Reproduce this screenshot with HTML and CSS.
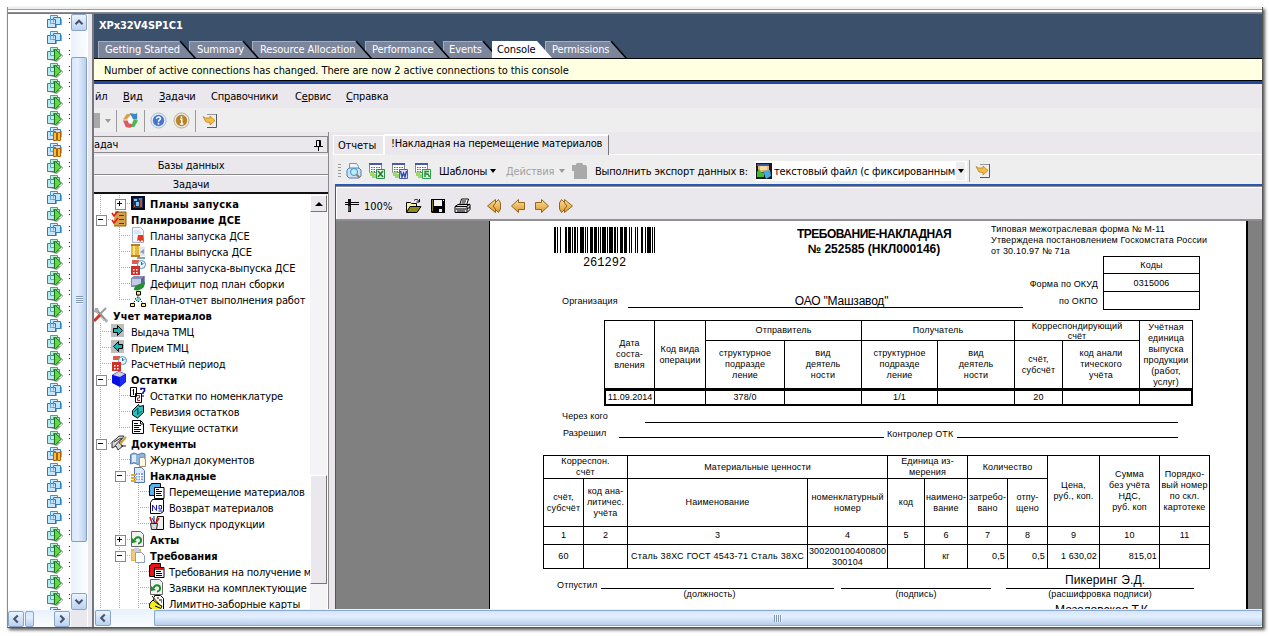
FILE: index.html
```html
<!DOCTYPE html>
<html lang="ru">
<head>
<meta charset="utf-8">
<title>XPx32V4SP1C1</title>
<link rel="stylesheet" href="styles.css">
</head>
<body>
<svg class="defs" width="0" height="0" aria-hidden="true">
  <symbol id="vm" viewBox="0 0 16 16">
    <path d="M2 14h8v-3h5V5h-1v5H9v3H2z" fill="#a4a4a4"/>
    <path d="M3.500 1.500h7v8h-7z" fill="#d9edfd" stroke="#3a93dc"/>
    <path d="M6.500 3.500h7v7h-7z" fill="#c3e2fb" stroke="#2380cc"/>
    <path d="M.5 5.500h8v8h-8z" fill="#c6e6fc" stroke="#1f7ac4"/>
    <path d="M3.500 5v4.500h5M6.500 5v3.500" fill="none" stroke="#5aa8e4"/>
  </symbol>
  <symbol id="play" viewBox="0 0 16 16">
    <path d="M2 14h8v-2h5V9h1v1l-6 6z" fill="#a4a4a4"/>
    <path d="M3.500 1.500h7v8h-7z" fill="#c4ecd8" stroke="#4aa48c"/>
    <path d="M6.500 3.500h6v7h-6z" fill="#9fe0b4" stroke="#38a068"/>
    <path d="M.5 5.500h8v8h-8z" fill="#c0e6f2" stroke="#2d84b8"/>
    <path d="M3.500 5v4.500h4" fill="none" stroke="#5ab4b0"/>
    <path d="M7.500 3.500h1L14.500 9l-6 5.500h-1z" fill="#66d83c" stroke="#0f7c20"/>
  </symbol>
  <symbol id="pause" viewBox="0 0 16 16">
    <use href="#vm"/>
    <path d="M6.500 6.500h3v8h-3zM10.500 6.500h3v8h-3z" fill="#ffb01e" stroke="#b05e08"/>
    <path d="M7 7h2v7H7zM11 7h2v7h-2z" fill="#ffbe38"/>
  </symbol>
  <symbol id="chess" viewBox="0 0 16 16"><path d="M1 1h14v14H1z" fill="#0c1838"/><path d="M2 2h12v12H2z" fill="none" stroke="#000"/><path d="M3 3h10v10H3z" fill="#1c3566"/><path d="M4 4h3v2H4zM6 7h3v4H6z" fill="#7fc4ee"/><path d="M10 5h2v7h-2zM4 10h1v2H4z" fill="#b5552a"/><path d="M9 3h3v2H9z" fill="#4c80b8"/></symbol>
  <symbol id="check" viewBox="0 0 16 16"><path d="M4 1h11v14H3V8z" fill="#d5a046"/><path d="M4 1h11v14H3" fill="none" stroke="#8a5a1c"/><path d="M8 4.500h5M8 8.500h5M8 12.500h5" stroke="#5a3510"/><path d="M1 2l2 3 4-5M1 9l2 3 4-5" fill="none" stroke="#e01818" stroke-width="1.600"/></symbol>
  <symbol id="cert" viewBox="0 0 16 16"><path d="M2.500.5h8l3 3v12h-11z" fill="#f4f7fd" stroke="#a8b4d0"/><path d="M4 4h6M4 6h7" stroke="#c4d0ea"/><path d="M8 8h5l1 7-2-2-2 2-1-2-2 1z" fill="#e23a22"/></symbol>
  <symbol id="roll" viewBox="0 0 16 16"><path d="M7 4h8v9H7z" fill="#dfe6ef"/><path d="M1 1h8v12H1z" fill="#e9b83a"/><path d="M3 1h2v12H3z" fill="#fbe28a"/><path d="M1 1h9v2H1zM1 12h9v2H1z" fill="#b5822a"/><path d="M10 9l4-3v5zM7 14h8v2H7z" fill="#8ea0b4"/></symbol>
  <symbol id="period" viewBox="0 0 16 16"><path d="M2 1h7v4H2z" fill="#e05a50"/><circle cx="11.500" cy="5.500" r="4" fill="#e4f6fb" stroke="#4a98b8"/><path d="M11.500 3v3l2-2" fill="none" stroke="#2c6c90"/><path d="M1 7h9v9H1z" fill="#cf3028"/><path d="M3 10h1.500v1.500H3zM6 10h1.500v1.500H6zM3 13h1.500v1.500H3zM6 13h1.500v1.500H6z" fill="#fff"/></symbol>
  <symbol id="deficit" viewBox="0 0 16 16"><path d="M1 3l3-2h11v8l-3 3H1z" fill="#8790b8"/><path d="M2 4h9v6H2z" fill="#c5cbe6"/><path d="M11 4l3-3v9l-3 2z" fill="#5c668f"/><path d="M4 15c0-4 4-6 7-6.500L15 7l-1 5c-3 3-6 4-10 3z" fill="#239030"/></symbol>
  <symbol id="org" viewBox="0 0 16 16"><path d="M8 4v3M5 10l-3 3M11 10l3 3M5 8l3-2 3 2-3 3z" fill="none" stroke="#222" stroke-dasharray="1.500 1"/><path d="M6.500.5h4V4h-4zM.5 12.500h4v3h-4zM11.500 12.500h4v3h-4z" fill="#fff45a" stroke="#000"/><path d="M6 8.500L8 6.500l2 2-2 2z" fill="#45d8e8"/></symbol>
  <symbol id="tools" viewBox="0 0 16 16"><path d="M4 3l9 10" stroke="#8a8a8a" stroke-width="3"/><path d="M4 4l8 9" stroke="#ddd"/><path d="M3 1l3 0 1 3-2 2-3-1zM12 12l3 0 1 2-2 2z" fill="#aaa"/><path d="M14 1L8 7" stroke="#9a9a9a" stroke-width="2"/><path d="M8 8l-6 6" stroke="#d83020" stroke-width="3"/></symbol>
  <symbol id="out" viewBox="0 0 16 16"><path d="M0 1h13v13H0z" fill="#bdbdbd"/><path d="M2.500 5.500h4v-3l5 5-5 5v-3h-4z" fill="#18b8b8" stroke="#000"/></symbol>
  <symbol id="in" viewBox="0 0 16 16"><path d="M0 1h13v13H0z" fill="#bdbdbd"/><path d="M11.500 5.500h-4v-3l-5 5 5 5v-3h4z" fill="#18b8b8" stroke="#000"/></symbol>
  <symbol id="cube" viewBox="0 0 16 16"><path d="M1 4l7-4 7 3v8l-6 5-8-4z" fill="#0a12f2"/><path d="M2 4l6-3.500L14 3 9 6z" fill="#d2d2d2"/><path d="M9 6.500L14.500 4v7L9 15z" fill="#1c2cff"/><path d="M2 5l6 2v8l-6-3z" fill="#0510d8"/></symbol>
  <symbol id="nomen" viewBox="0 0 16 16"><path d="M.5.500h6v9h-6zM5.500 6.500h6v9h-6z" fill="#fff" stroke="#000"/><path d="M3.500 2v6M2.500 3.500h1" stroke="#000"/><path d="M7 8.500h2.500v2.500H7.500v2.500H10" fill="none" stroke="#c01818"/><path d="M11 3V1.500h3.500v2.500L13 5.500V7M12.200 9h1.600" fill="none" stroke="#10108c" stroke-width="1.600"/></symbol>
  <symbol id="book3" viewBox="0 0 16 16"><path d="M2.500 7.500l6-6 1 2 4-1v7l-6 5.500-5-3z" fill="#2cc0c4" stroke="#000"/><path d="M4 9l4-4v6l4-3M7.500 12V6" fill="none" stroke="#064"/></symbol>
  <symbol id="page" viewBox="0 0 16 16"><path d="M2.500 1.500h8l3 3v10h-11z" fill="#fff" stroke="#000"/><path d="M4 4.500h4M4 6.500h7M4 8.500h5M4 10.500h7M4 12.500h6M10.500 2v3h3" fill="none" stroke="#000"/></symbol>
  <symbol id="pens" viewBox="0 0 16 16"><path d="M1 7l4-3 3-3h5l-5 7 4 3-5 4-2-4-4 2z" fill="#d5d8dc" stroke="#333"/><path d="M3 7l7-4M3 12l8-9" stroke="#444"/><path d="M15 2L9 9" stroke="#d89a28" stroke-width="2"/><path d="M10 11l5 0" stroke="#222"/></symbol>
  <symbol id="journal" viewBox="0 0 16 16"><path d="M.5 3.500L4 2l4 1.500 4-1.500 3 1v9l-3-.5-4 2-4-1.500-3.500 1z" fill="#8fb4dc" stroke="#5a7cae"/><path d="M2 4l4-.5v7.500l-4 0z" fill="#dcebfb"/><path d="M9.500 6.500h4l2 2v7h-6z" fill="#fff9e0" stroke="#a09468"/></symbol>
  <symbol id="invoice" viewBox="0 0 16 16"><path d="M4.500.5h7l3 3v12h-10z" fill="#dce8fa" stroke="#5577b0"/><path d="M6 6h7v7H6z" fill="#7f9fd4"/><path d="M8 6v7M10.500 6v7M6 8.500h7M6 11h7" stroke="#fff"/><path d="M1 7h5v2H1zM1 10h5v2H1zM1 13h5v2H1z" fill="#e8a820"/></symbol>
  <symbol id="move" viewBox="0 0 16 16"><path d="M.5 2.500h1l1-2h9v12h-11z" fill="#55b4f0" stroke="#000"/><path d="M5.500 4.500h9.500v11h-9.500z" fill="#fff" stroke="#000"/><path d="M7 6.500h3M7 8.500h6M7 10.500h5M7 12.500h6" stroke="#000"/></symbol>
  <symbol id="return" viewBox="0 0 16 16"><path d="M3.500.5h11v12l-3 2h-10v-11z" fill="#fff" stroke="#000"/><path d="M3.500 12V6l4 5.500V6" fill="none" stroke="#1414c0"/><path d="M10 6.500h2.500v3.500H10zM9.500 12h4" fill="none" stroke="#1414c0"/></symbol>
  <symbol id="prod" viewBox="0 0 16 16"><path d="M8.500 1.500h6v13h-9z" fill="#eee" stroke="#000"/><path d="M3 8l-2-6M7 8l3-5" stroke="#d01818" stroke-width="1.500"/><path d="M5 8V1" stroke="#222"/><path d="M6 8l-3-5" stroke="#2020d0"/><path d="M1.500 8.500h7l-1 6h-5z" fill="#d8d8d8" stroke="#222"/></symbol>
  <symbol id="akt" viewBox="0 0 16 16"><path d="M1.500.5h9l3 3v12h-12z" fill="#f1f1f1" stroke="#666"/><path d="M4.500 9C6 5.500 10 5.500 11 8.500c.5 2-1 4-3 4" fill="none" stroke="#1b8c24" stroke-width="2"/><path d="M2 7l5 4-5 1z" fill="#1b8c24"/></symbol>
  <symbol id="paste" viewBox="0 0 16 16"><path d="M1 2h10v12H1z" fill="#ebb548"/><path d="M2 4h8v9H2z" fill="#f2cb78"/><path d="M4 .5h5V4H4z" fill="#c9d2dc"/><path d="M5.500 5.500h6l3 3v7h-9z" fill="#fff" stroke="#8ba0bc"/></symbol>
  <symbol id="req" viewBox="0 0 16 16"><path d="M.5 2.500h1l1-2h9v13h-11z" fill="#f01010" stroke="#000"/><path d="M5.500 4.500h9.500v10h-9.500z" fill="#fff" stroke="#000"/><path d="M6 6h9" stroke="#f01010" stroke-width="2"/><path d="M7 8.500h5M7 10.500h6M7 12.500h6" stroke="#000"/></symbol>
  <symbol id="limit" viewBox="0 0 16 16"><path d="M5.500.5h6l3 3v12h-12z" fill="#fff" stroke="#000"/><path d="M8 3h2M10 5h3M12 7h1" stroke="#000"/><path d="M1 8l3-3 5 4 4 2-2 4H4L0 12z" fill="#f4ee20" stroke="#000"/><path d="M3 1l7 8M6 11l5 2" stroke="#000"/><path d="M4 1l7 8" stroke="#f4ee20"/></symbol>

  <symbol id="ring" viewBox="0 0 18 18"><path d="M1 8l4-6h5L5 8z" fill="#dca048"/><path d="M8 1l6 1 2-1v7l-6 0 1-2z" fill="#3a88cc"/><path d="M12 8l5 1-4 7H8l3-4z" fill="#48b850"/><path d="M1 9h5l1 3 4 1-2 4-5-1z" fill="#dc5a60"/><path d="M6 7.500l3-3 3.500 4L9 12z" fill="#fff"/></symbol>
  <symbol id="help" viewBox="0 0 18 18"><circle cx="9" cy="9" r="8" fill="#e6edf8" stroke="#a8b8d4"/><circle cx="9" cy="9" r="6" fill="#4577cc"/><path d="M6.800 7.200C7 4.500 11.500 4.800 11 7.300 10.700 8.500 9 8.700 9 10.200M9 11.500v1.700" fill="none" stroke="#fff" stroke-width="1.600"/></symbol>
  <symbol id="info" viewBox="0 0 18 18"><circle cx="9" cy="9" r="8" fill="#efe9dc" stroke="#b0aaa0"/><circle cx="9" cy="9" r="6" fill="#b5852c"/><path d="M9 4.500v1.800M7.500 7.800H9.300v5M7.500 12.800h3.500" fill="none" stroke="#fff" stroke-width="1.600"/></symbol>
  <symbol id="exit" viewBox="0 0 16 16"><path d="M14.500 1v13.500H5" fill="none" stroke="#55585e"/><path d="M5 1.500h9" stroke="#999"/><path d="M1 3.500l2.500 1.500L8 5V3l5 4.500L8 12V9.500L4 9z" fill="#f8bc40" stroke="#b8842c" stroke-width=".8"/></symbol>

  <symbol id="preview" viewBox="0 0 16 16"><path d="M3.500.5h7l2 3v4h-9z" fill="#eef7ff" stroke="#5a9cd0"/><path d="M1 7l2-2h10l2 2v6l-2 2H3l-2-2z" fill="#cfe0f4" stroke="#4c7fb8"/><circle cx="8" cy="9" r="3.500" fill="#b8f0fa" stroke="#3a90c0"/><path d="M10.500 11.500l3 3" stroke="#c07030" stroke-width="1.800"/></symbol>
  <symbol id="grid" viewBox="0 0 16 16"><path d="M.5.5h12v9H.5z" fill="#fff" stroke="#888"/><path d="M0 0h13v2H0z" fill="#4a58a8"/><path d="M2 4.500h10M2 6.500h10M2 8.500h8" stroke="#666" stroke-dasharray="1.500 1"/><path d="M1 9h4v2h3v4H3v-2H1z" fill="#9cd870"/></symbol>
  <symbol id="xls" viewBox="0 0 16 16"><use href="#grid"/><path d="M7.500 6.500h8v9h-8z" fill="#e0f2e0" stroke="#2f8f46"/><path d="M9 8l5 6M14 8l-5 6" stroke="#217a38" stroke-width="1.600"/></symbol>
  <symbol id="doc" viewBox="0 0 16 16"><use href="#grid"/><path d="M7.500 6.500h8v9h-8z" fill="#e2e8fa" stroke="#4a60b0"/><path d="M8.500 8l1.500 6 1.500-4 1.500 4L14.500 8" fill="none" stroke="#2c48a8" stroke-width="1.400"/></symbol>
  <symbol id="ole" viewBox="0 0 16 16"><use href="#grid"/><path d="M7.500 6.500h8v9h-8z" fill="#e0f2e0" stroke="#2f9f46"/><path d="M10 14V8.500h4M10 11h3l1.500 3" fill="none" stroke="#1f8a3a" stroke-width="1.400"/></symbol>
  <symbol id="clip" viewBox="0 0 16 16"><path d="M0 2h4V1l1-1h5l1 1v1h3l1 2v12H2V8H0z" fill="#a9a9a9"/></symbol>
  <symbol id="fmt" viewBox="0 0 16 16"><path d="M0 0h16v16H0z" fill="#16181c"/><path d="M1 1h12v2H1z" fill="#3d5aa8"/><path d="M2 3h11v6H2z" fill="#e8b868"/><path d="M4 3h7v4H4z" fill="#f6dca0"/><path d="M1 14V9l2-3 2 3 3 1v4z" fill="#46b838"/><path d="M7 8l7-1 1 6-5 3z" fill="#48a8e0"/></symbol>

  <symbol id="ruler" viewBox="0 0 16 16"><path d="M1 4h14v1H1zM1 6h14v1H1z" fill="#000"/><path d="M4 1h3v13H4z" fill="#111"/><path d="M5 8v5" stroke="#8aa"/></symbol>
  <symbol id="open" viewBox="0 0 17 16"><path d="M1.500 14V4.500h4l1 1h5V8" fill="#fbf3a0" stroke="#000"/><path d="M1.500 14.500L5 8.500h11L12 14.500z" fill="#8c8c14" stroke="#000"/><path d="M9 2.500c2-2 4-1 5 1M14.500 1v3h-3" fill="none" stroke="#000"/></symbol>
  <symbol id="save" viewBox="0 0 16 16"><path d="M1 1h14v14H2l-1-1z" fill="#000"/><path d="M4 2h8v6H4z" fill="#f3f1f5"/><path d="M13 2h1v1h-1z" fill="#fff"/><path d="M2 2h1v11H2z" fill="#807c18"/><path d="M9 11h3v3H9z" fill="#e9e9e9"/></symbol>
  <symbol id="print" viewBox="0 0 17 16"><path d="M5.500 7.500l2-6.500h7l-2 6" fill="#fff" stroke="#000"/><path d="M8 3h4M7.500 5h4" stroke="#000"/><path d="M1 8.500l3-2h9l3 0v5l-3 3H1z" fill="#ddd" stroke="#000"/><path d="M1 8.500h12v6M13 8l3-2M2 11h10M3 13h8M13 11l3-2" fill="none" stroke="#000"/></symbol>
  <linearGradient id="gold" x1="0" y1="0" x2="0" y2="1"><stop offset="0" stop-color="#ffdf9a"/><stop offset="1" stop-color="#d89828"/></linearGradient>
  <symbol id="next" viewBox="0 0 16 16"><path d="M1.500 4.500h6v-3L14.500 8l-7 6.500v-3h-6z" fill="url(#gold)" stroke="#946420"/></symbol>
  <symbol id="last" viewBox="0 0 16 16"><path d="M1.500 5l2-3.500L10 8l-6.500 6.500L1.500 11z" fill="url(#gold)" stroke="#946420"/><path d="M6.500 5V1.500L14.500 8l-8 6.500V11L9 8z" fill="url(#gold)" stroke="#946420"/></symbol>
</svg>

<div class="window">
  <div class="topstrip"></div>
  <div class="body">
    <div class="inventory">
      <div class="inv-main">
        <div class="vmlist">
          <svg><use href="#vm"/></svg><svg><use href="#vm"/></svg><svg><use href="#play"/></svg><svg><use href="#play"/></svg><svg><use href="#play"/></svg><svg><use href="#play"/></svg><svg><use href="#play"/></svg><svg><use href="#pause"/></svg><svg><use href="#pause"/></svg><svg><use href="#play"/></svg>
          <svg><use href="#play"/></svg><svg><use href="#vm"/></svg><svg><use href="#play"/></svg><svg><use href="#vm"/></svg><svg><use href="#play"/></svg><svg><use href="#play"/></svg><svg><use href="#play"/></svg><svg><use href="#play"/></svg><svg><use href="#play"/></svg><svg><use href="#vm"/></svg>
          <svg><use href="#play"/></svg><svg><use href="#play"/></svg><svg><use href="#play"/></svg><svg><use href="#vm"/></svg><svg><use href="#vm"/></svg><svg><use href="#play"/></svg><svg><use href="#play"/></svg><svg><use href="#pause"/></svg><svg><use href="#vm"/></svg><svg><use href="#vm"/></svg>
          <svg><use href="#vm"/></svg><svg><use href="#vm"/></svg><svg><use href="#play"/></svg><svg><use href="#play"/></svg><svg><use href="#play"/></svg><svg><use href="#play"/></svg><svg><use href="#play"/></svg><svg><use href="#vm"/></svg>
        </div>
        <div class="cut"></div>
        <div class="vscroll">
          <div class="sb-btn"><svg viewBox="0 0 16 16"><path d="M4 10l4-4 4 4"/></svg></div>
          <div class="vthumb"><i class="grip-h"></i></div>
          <div class="sb-btn"><svg viewBox="0 0 16 16"><path d="M4 6l4 4 4-4"/></svg></div>
        </div>
      </div>
      <div class="hscroll inv-h">
        <div class="sb-btn"><svg viewBox="0 0 16 16"><path d="M10 4L6 8l4 4"/></svg></div>
        <div class="hthumb small"></div>
        <div class="sb-btn right"><svg viewBox="0 0 16 16"><path d="M6 4l4 4-4 4"/></svg></div>
        <div class="corner"></div>
      </div>
    </div>
    <div class="splitter"></div>
    <div class="main">
      <div class="vmhead">
        <div class="vmname">XPx32V4SP1C1</div>
        <div class="tabs">
          <div class="tab t1"><span>Getting Started</span></div>
          <div class="tab t2"><span>Summary</span></div>
          <div class="tab t3"><span>Resource Allocation</span></div>
          <div class="tab t4"><span>Performance</span></div>
          <div class="tab t5"><span>Events</span></div>
          <div class="tab t6 on"><span>Console</span></div>
          <div class="tab t7"><span>Permissions</span></div>
        </div>
      </div>
      <div class="notice"><span>Number of active connections has changed. There are now 2 active connections to this console</span></div>
      <div class="console">
        <div class="menu">
          <span class="m0">йл</span><span class="m1"><u>В</u>ид</span><span class="m2"><u>З</u>адачи</span><span class="m3">Сп<u>р</u>авочники</span><span class="m4">С<u>е</u>рвис</span><span class="m5"><u>С</u>правка</span>
        </div>
        <div class="apptools">
          <i class="stub"></i><i class="dd dis"></i><i class="sep"></i>
          <svg class="big"><use href="#ring"/></svg><i class="sep"></i>
          <svg class="big"><use href="#help"/></svg><svg class="big g5"><use href="#info"/></svg><i class="sep"></i>
          <svg class="ic"><use href="#exit"/></svg>
        </div>
        <div class="work">
          <div class="sidebar">
            <div class="side-head"><span>адач</span><svg viewBox="0 0 9 12"><path d="M2.500 7V1.500h4V7M5.500 1v6M0 7.500h9M4.500 8v4" fill="none" stroke="#000"/></svg></div>
            <div class="side-bar b1"><span>Базы данных</span></div>
            <div class="side-bar b2"><span>Задачи</span></div>
            <div class="treebox">
              <div class="tree">
                <div class="row b"><i class="v"></i><i class="l x plus"></i><svg><use href="#chess"/></svg><span class="wide-t">Планы запуска</span></div>
                <div class="row b"><i class="l x"></i><svg><use href="#check"/></svg><span>Планирование ДСЕ</span></div>
                <div class="row"><i></i><i class="t"></i><svg><use href="#cert"/></svg><span>Планы запуска ДСЕ</span></div>
                <div class="row"><i></i><i class="t"></i><svg><use href="#roll"/></svg><span>Планы выпуска ДСЕ</span></div>
                <div class="row"><i></i><i class="t"></i><svg><use href="#period"/></svg><span>Планы запуска-выпуска ДСЕ</span></div>
                <div class="row"><i></i><i class="t"></i><svg><use href="#deficit"/></svg><span>Дефицит под план сборки</span></div>
                <div class="row"><i></i><i class="l"></i><svg><use href="#org"/></svg><span>План-отчет выполнения работ</span></div>
                <div class="row b root"><svg><use href="#tools"/></svg><span>Учет материалов</span></div>
                <div class="row"><i class="t"></i><svg><use href="#out"/></svg><span>Выдача ТМЦ</span></div>
                <div class="row"><i class="t"></i><svg><use href="#in"/></svg><span>Прием ТМЦ</span></div>
                <div class="row"><i class="t"></i><svg><use href="#period"/></svg><span>Расчетный период</span></div>
                <div class="row b"><i class="t x"></i><svg><use href="#cube"/></svg><span>Остатки</span></div>
                <div class="row"><i class="v"></i><i class="t"></i><svg><use href="#nomen"/></svg><span>Остатки по номенклатуре</span></div>
                <div class="row"><i class="v"></i><i class="t"></i><svg><use href="#book3"/></svg><span>Ревизия остатков</span></div>
                <div class="row"><i class="v"></i><i class="l"></i><svg><use href="#page"/></svg><span>Текущие остатки</span></div>
                <div class="row b"><i class="t x"></i><svg><use href="#pens"/></svg><span>Документы</span></div>
                <div class="row"><i class="v"></i><i class="t"></i><svg><use href="#journal"/></svg><span>Журнал документов</span></div>
                <div class="row b"><i class="v"></i><i class="t x"></i><svg><use href="#invoice"/></svg><span>Накладные</span></div>
                <div class="row"><i class="v"></i><i class="v"></i><i class="t"></i><svg><use href="#move"/></svg><span>Перемещение материалов</span></div>
                <div class="row"><i class="v"></i><i class="v"></i><i class="t"></i><svg><use href="#return"/></svg><span>Возврат материалов</span></div>
                <div class="row"><i class="v"></i><i class="v"></i><i class="l"></i><svg><use href="#prod"/></svg><span>Выпуск продукции</span></div>
                <div class="row b"><i class="v"></i><i class="t x plus"></i><svg><use href="#akt"/></svg><span>Акты</span></div>
                <div class="row b"><i class="v"></i><i class="t x"></i><svg><use href="#paste"/></svg><span>Требования</span></div>
                <div class="row"><i class="v"></i><i class="v"></i><i class="t"></i><svg><use href="#req"/></svg><span>Требования на получение м</span></div>
                <div class="row"><i class="v"></i><i class="v"></i><i class="t"></i><svg><use href="#akt"/></svg><span>Заявки на комплектующие</span></div>
                <div class="row"><i class="v"></i><i class="v"></i><i class="t"></i><svg><use href="#limit"/></svg><span>Лимитно-заборные карты</span></div>
              </div>
              <div class="cscroll"><div class="cbtn"><i></i></div><div class="cthumb"></div></div>
            </div>
          </div>
          <div class="content">
            <div class="doctabs"><div class="dt">Отчеты</div><div class="dt act"><span>!Накладная на перемещение материалов</span></div></div>
            <div class="reptools">
              <i class="handle"></i>
              <svg class="ic"><use href="#preview"/></svg><svg class="ic"><use href="#xls"/></svg><svg class="ic"><use href="#doc"/></svg><svg class="ic"><use href="#ole"/></svg>
              <span class="r1">Шаблоны</span><i class="dd"></i>
              <span class="r2">Действия</span><i class="dd dis"></i>
              <svg class="ic r-clip"><use href="#clip"/></svg>
              <span class="r3">Выполнить экспорт данных в:</span>
              <div class="combo"><svg class="ic"><use href="#fmt"/></svg><span>текстовый файл (с фиксированным</span><b><i class="dd"></i></b></div>
              <i class="sep"></i><svg class="ic"><use href="#exit"/></svg>
            </div>
            <div class="viewer">
              <div class="viewtools">
                <svg class="ic v1"><use href="#ruler"/></svg><span>100%</span>
                <svg class="ic v2"><use href="#open"/></svg><svg class="ic v3"><use href="#save"/></svg><svg class="ic v4"><use href="#print"/></svg>
                <svg class="ic v5 flip"><use href="#last"/></svg><svg class="ic v6 flip"><use href="#next"/></svg><svg class="ic v7"><use href="#next"/></svg><svg class="ic v8"><use href="#last"/></svg>
              </div>
              <div class="canvas">
                <div class="paper">
                  <div class="p-head">
                    <div class="barcode">
                      <svg width="101" height="26" viewBox="0 0 101 26" shape-rendering="crispEdges"><path fill="#000" d="M0 0h2v26h-2zM3 0h1v26h-1zM6 0h1v26h-1zM11 0h2v26h-2zM14 0h3v26h-3zM18 0h1v26h-1zM20 0h2v26h-2zM23 0h1v26h-1zM26 0h4v26h-4zM31 0h1v26h-1zM33 0h1v26h-1zM36 0h3v26h-3zM40 0h3v26h-3zM44 0h1v26h-1zM46 0h1v26h-1zM48 0h4v26h-4zM53 0h1v26h-1zM55 0h4v26h-4zM60 0h2v26h-2zM63 0h1v26h-1zM66 0h3v26h-3zM70 0h3v26h-3zM75 0h1v26h-1zM77 0h1v26h-1zM81 0h1v26h-1zM83 0h1v26h-1zM87 0h2v26h-2zM91 0h1v26h-1zM93 0h4v26h-4zM98 0h1v26h-1zM100 0h1v26h-1z"/></svg>
                      <span>261292</span>
                    </div>
                    <div class="title">ТРЕБОВАНИЕ-НАКЛАДНАЯ<br><span>№ 252585 (НКЛ000146)</span></div>
                    <div class="form-note"><span>Типовая межотраслевая форма № М-11</span><br><span>Утверждена постановлением Госкомстата России</span><br><span>от 30.10.97 № 71а</span></div>
                  </div>
                  <div class="p-org">
                    <span class="org-l">Организация</span>
                    <div class="org-name"><span>ОАО "Машзавод"</span></div>
                    <div class="code-l"><span>Форма по ОКУД</span><span>по ОКПО</span></div>
                    <div class="codes"><div>Коды</div><div>0315006</div><div></div></div>
                  </div>
                  <div class="t-one">
                    <div class="tall">Дата<br>соста-<br>вления</div><div class="tall">Код вида<br>операции</div><div class="two">Отправитель</div><div class="two">Получатель</div><div class="two tight">Корреспондирующий<br>счёт</div><div class="tall">Учётная<br>единица<br>выпуска<br>продукции<br>(работ,<br>услуг)</div>
                    <div>структурное<br>подразде<br>ление</div><div>вид<br>деятель<br>ности</div><div>структурное<br>подразде<br>ление</div><div>вид<br>деятель<br>ности</div><div>счёт,<br>субсчёт</div><div>код анали<br>тического<br>учёта</div>
                    <div class="d first">11.09.2014</div><div class="d"></div><div class="d">378/0</div><div class="d"></div><div class="d">1/1</div><div class="d"></div><div class="d">20</div><div class="d"></div><div class="d lastc"></div>
                  </div>
                  <div class="line-row who"><span>Через кого</span><i></i></div>
                  <div class="line-row allow"><span>Разрешил</span><i></i><span class="otk">Контролер ОТК</span><i></i></div>
                  <div class="t-two">
                    <div class="two">Корреспон.<br>счёт</div><div class="two">Материальные ценности</div><div class="two">Единица из-<br>мерения</div><div class="two">Количество</div><div class="tall">Цена,<br>руб., коп.</div><div class="tall">Сумма<br>без учёта<br>НДС,<br>руб. коп</div><div class="tall">Порядко-<br>вый номер<br>по скл.<br>картотеке</div>
                    <div>счёт,<br>субсчёт</div><div>код ана-<br>литичес.<br>учёта</div><div>Наименование</div><div>номенклатурный<br>номер</div><div>код</div><div>наимено-<br>вание</div><div>затребо-<br>вано</div><div>отпу-<br>щено</div>
                    <div>1</div><div>2</div><div>3</div><div>4</div><div>5</div><div>6</div><div>7</div><div>8</div><div>9</div><div>10</div><div>11</div>
                    <div>60</div><div></div><div class="mat">Сталь 38ХС ГОСТ 4543-71 Сталь 38ХС</div><div>300200100400800<br>300104</div><div></div><div>кг</div><div class="num">0,5</div><div class="num">0,5</div><div class="num">1 630,02</div><div class="num">815,01</div><div></div>
                  </div>
                  <div class="sign">
                    <span>Отпустил</span>
                    <div class="s1"><em></em><small>(должность)</small></div>
                    <div class="s2"><em></em><small>(подпись)</small></div>
                    <div class="s3"><em>Пикеринг Э.Д.</em><small>(расшифровка подписи)</small></div>
                  </div>
                  <div class="sign-next">Мозоловская Т.К.</div>
                </div>
              </div>
            </div>
          </div>
        </div>
      </div>
      <div class="hscroll main-h">
        <div class="sb-btn"><svg viewBox="0 0 16 16"><path d="M10 4L6 8l4 4"/></svg></div>
        <div class="hthumb wide"><i class="grip-v"></i></div>
      </div>
    </div>
  </div>
</div>
</body>
</html>
```
FILE: styles.css
```css
* { box-sizing: border-box; }
html, body { margin: 0; height: 100%; background: #fff; overflow: hidden; }
body { padding: 7px 0 0 7px; font: 11px/16px "DejaVu Sans Condensed", "DejaVu Sans", sans-serif; font-stretch: condensed; letter-spacing: -.17px; color: #000; white-space: nowrap; }
svg, i { flex: none; display: block; }
i, em, small { font-style: normal; }
.defs { position: absolute; }

.window { width: 1256px; height: 621px; display: flex; flex-direction: column; background: #eae8ed; border-left: 1px solid #8c8c8c; border-right: 1px solid #555; border-bottom: 1px solid #555; box-shadow: 2px 2px 3px rgba(0,0,0,.65); }
.topstrip { height: 7px; flex: none; background: linear-gradient(#eee 0 2px, #9c9ca4 2px 3px, #fff 3px 5px, #8e8e94 5px 6px, #77777f 6px 7px); }
.body { flex: 1; display: flex; min-height: 0; }

/* inventory column */
.inventory { width: 79px; display: flex; flex-direction: column; }
.inv-main { height: 596px; display: flex; background: #fff; }
.vmlist { width: 59px; padding-left: 39px; overflow: hidden; }
.vmlist svg { width: 16px; height: 16px; }
.cut { width: 4px; background: repeating-linear-gradient(#fff 0 4px, #222 4px 5px, #fff 5px 8px, #222 8px 9px, #fff 9px 16px) 2px 0 / 1px 100% no-repeat; }
.vscroll { width: 16px; display: flex; flex-direction: column; background: linear-gradient(90deg, #e9f1fc, #fbfdff); }
.vthumb { height: 485px; margin: 26px 0 auto; border: 1px solid #7f9fc8; border-radius: 2px; background: linear-gradient(90deg, #d7e6fb, #e4effe 40%, #b9cfee); display: flex; align-items: center; justify-content: center; }
.grip-h { width: 7px; height: 8px; background: repeating-linear-gradient(#7f96b8 0 1px, #f0f6ff 1px 2px); margin-top: 1px; }
.sb-btn { width: 16px; height: 17px; flex: none; border: 1px solid #8aa4c8; border-radius: 2px; background: linear-gradient(#eaf3ff, #bdd2f0); }
.sb-btn svg { width: 14px; height: 15px; fill: none; stroke: #44546c; stroke-width: 2.400; }
.hscroll { height: 18px; display: flex; background: linear-gradient(#e8f1fc, #fbfdff); padding-top: 1px; }
.hscroll .sb-btn { height: 16px; }
.hscroll .sb-btn svg { height: 14px; }
.hthumb { border: 1px solid #8aa8d0; background: linear-gradient(#d6e6fb, #e3effe 40%, #b7cdeb); border-radius: 2px; height: 16px; }
.small { width: 9px; margin-left: 1px; }
.right { margin-left: 20px; }
.corner { flex: 1; background: #eae8ed; margin: -1px 0 0 1px; }
.splitter { width: 7px; border-left: 1px solid #fff; border-right: 2px solid #77777f; background: #eae8ed; }

/* header */
.main { flex: 1; min-width: 0; display: flex; flex-direction: column; }
.vmhead { height: 45px; background: #3b516b; border-bottom: 1px solid #000; color: #fff; letter-spacing: -.1px; }
.vmname { height: 27px; padding: 4px 0 0 5px; font-weight: bold; }
.tabs { display: flex; padding-left: 4px; }
.tab { height: 17px; margin-right: -7px; position: relative; background: #000; clip-path: polygon(0 0, calc(100% - 15px) 0, 100% 100%, 0 100%); }
.tab span { display: block; height: 17px; line-height: 16px; padding-left: 6px; background: #7b859c; border-left: 1px solid #a4adc0; border-top: 1px solid #a4adc0; clip-path: polygon(0 0, calc(100% - 17px) 0, calc(100% - 2px) 100%, 0 100%); }
.tab.on, .tab.on span { background: #fff; color: #000; }
.tab.on span { border-color: #fff; padding-left: 4px; }
.t1 { width: 98px; z-index: 7; } .t2 { width: 70px; z-index: 6; } .t3 { width: 120px; z-index: 5; } .t4 { width: 85px; z-index: 4; }
.t5 { width: 56px; z-index: 3; } .t6 { width: 60px; z-index: 8; } .t7 { width: 82px; z-index: 2; }
.t2 span, .t3 span { padding-left: 7px; }
.t5 span { padding-left: 5px; }
.notice { height: 23px; background: #ffffe1; border-bottom: 1px solid #000; padding: 4px 0 0 10px; letter-spacing: -.09px; }

/* remote application */
.console { height: 528px; border-top: 3px solid #2447a0; background: #eae8ed; display: flex; flex-direction: column; }
.menu { height: 24px; display: flex; padding-top: 5px; }
.menu span { flex: none; }
.m0 { width: 29px; padding-left: 1px; } .m1 { width: 36px; } .m2 { width: 52px; } .m3 { width: 84px; } .m4 { width: 51px; }
.apptools { height: 24px; background: #eee; display: flex; align-items: center; padding-top: 1px; }
.stub { width: 6px; height: 15px; background: #a9a9a9; }
.dd { border: 3px solid transparent; border-top: 4px solid #000; border-bottom: 0; width: 6px; height: 4px; }
.dd.dis { border-top-color: #9a9a9a; }
.apptools .dd { margin: 0 5px 0 5px; }
.sep { width: 1px; height: 22px; background: #9b9b9f; }
.apptools .sep { margin: 0 5px 0 0; }
.big { width: 17px; height: 17px; }
.apptools .big { margin-right: 5px; }
.apptools .ic { margin-left: 1px; }
.ic { width: 16px; height: 16px; }
.g5 { margin-left: 1px; }
.work { flex: 1; display: flex; min-height: 0; }

/* task sidebar */
.sidebar { width: 235px; padding-top: 4px; display: flex; flex-direction: column; border-right: 1px solid #8a8a8a; }
.side-head { height: 17px; border: 1px solid #8a8a8a; border-left: 0; display: flex; justify-content: space-between; padding: 0 4px 0 0; }
.side-head svg { width: 9px; height: 12px; margin-top: 2px; }
.side-bar { text-align: center; padding-right: 40px; border-top: 1px solid #fff; }
.b1 { height: 20px; margin-top: 2px; padding-top: 2px; border-bottom: 1px solid #8a8a8a; }
.b2 { height: 19px; padding-top: 1px; border-bottom: 2px solid #111; line-height: 15px; }
.treebox { flex: 1; min-height: 0; background: #fff; display: flex; }
.tree { width: 216px; padding-top: 1px; overflow: hidden; }
.row { height: 16px; margin-left: -2px; display: flex; }
.row svg { width: 16px; height: 16px; }
.row span { margin-left: 4px; line-height: 19px; }
.row.root span { margin-left: 5px; }
.b { font-weight: bold; letter-spacing: .02px; }
.wide-t { letter-spacing: .2px; }
.row i { width: 19px; height: 16px; position: relative; }
.row i.v, .row i.t { background: repeating-linear-gradient(#aaa 0 1px, transparent 1px 2px) 8px 0 / 1px 100% no-repeat; }
.row i.l { background: repeating-linear-gradient(#aaa 0 1px, transparent 1px 2px) 8px 0 / 1px 9px no-repeat; }
.row i.t::before, .row i.l::before { content: ""; position: absolute; left: 8px; top: 8px; width: 11px; height: 1px; background: repeating-linear-gradient(90deg, #aaa 0 1px, transparent 1px 2px); }
.row i.x::after { content: ""; position: absolute; left: 4px; top: 4px; width: 9px; height: 9px; border: 1px solid #8a8a8a; background: linear-gradient(#000, #000) 1px 3px / 5px 1px no-repeat, #fff; }
.row i.plus::after { background: linear-gradient(#000, #000) 1px 3px / 5px 1px no-repeat, linear-gradient(#000, #000) 3px 1px / 1px 5px no-repeat, #fff; }
.cscroll { width: 17px; background: #f4f3f5; }
.cbtn { height: 17px; margin-top: 1px; background: #eae8ed; border: 1px solid #fff; border-right-color: #777; border-bottom-color: #777; display: grid; place-items: center; }
.cbtn i { border: 4px solid transparent; border-bottom: 4px solid #000; border-top: 0; }
.cthumb { height: 109px; margin-top: 263px; background: #eae8ed; border: 1px solid #fff; border-right-color: #777; border-bottom-color: #777; }

/* report pane */
.content { flex: 1; min-width: 0; padding-left: 4px; display: flex; flex-direction: column; }
.doctabs { height: 23px; display: flex; align-items: flex-end; border-bottom: 1px solid #fff; }
.dt { height: 19px; width: 51px; border: 1px solid #fff; border-bottom: 0; padding: 2px 0 0 4px; }
.dt.act { height: 21px; width: 225px; border-top-width: 2px; border-right: 1px solid #777; padding: 0 0 0 6px; margin-bottom: -1px; background: #eae8ed; letter-spacing: -.2px; }
.reptools { height: 29px; background: #eee; display: flex; align-items: center; padding: 3px 0 0 5px; }
.reptools span { position: relative; top: 1px; }
.handle { width: 3px; height: 15px; margin-right: 5px; background: repeating-linear-gradient(#999 0 1px, transparent 1px 3px); }
.reptools > .ic { margin-right: 7px; }
.reptools > .dd { margin: 0 0 0 3px; }
.r1 { width: 48px; margin-left: 1px; } .r2 { width: 50px; margin-left: 10px; color: #a2a2a2; } .r3 { width: 160px; }
.reptools > .r-clip { margin-left: 7px; }
.combo { width: 212px; height: 20px; background: #fff; display: flex; align-items: center; padding-left: 1px; }
.combo span { width: 182px; margin-left: 2px; }
.combo b { width: 9px; height: 18px; background: #eee; display: grid; place-items: center; }
.reptools .sep { margin: 0 5px 0 2px; }
.viewer { flex: 1; min-height: 0; margin-left: 2px; border: 1px solid #2a59b0; border-width: 2px 0 0 1px; display: flex; flex-direction: column; }
.viewtools { height: 35px; border-top: 1px solid #8f8f94; border-bottom: 2px solid #8f8f94; box-shadow: inset 1px 1px #fff; display: flex; align-items: center; padding: 5px 0 0 8px; }
.viewtools span { width: 41px; margin-left: 4px; padding-top: 3px; letter-spacing: 0; }
.v2 { width: 17px; } .v3 { margin-left: 8px; } .v4 { width: 17px; margin-left: 8px; } .v5 { margin-left: 15px; } .v6, .v7 { margin-left: 8px; } .v8 { margin-left: 8px; }
.flip { transform: scaleX(-1); }
.canvas { flex: 1; min-height: 0; background: #808080; padding-left: 153px; overflow: hidden; }

/* printed form */
.paper { width: 759px; height: 400px; background: #fff; border-left: 1px solid #000; border-right: 2px solid #000; font: 9px/11px "Liberation Sans", Arial, sans-serif; font-stretch: normal; letter-spacing: .13px; }
.p-head { height: 35px; display: flex; position: relative; }
.barcode { width: 101px; margin: 6px 0 0 64px; }
.barcode span { display: block; text-align: center; font: 12px/14px "Liberation Mono", monospace; letter-spacing: 0; padding-top: 3px; }
.title { width: 160px; margin: 6px 0 0 139px; display: grid; justify-content: center; justify-items: center; font: bold 12px/14px "Liberation Sans", Arial, sans-serif; letter-spacing: -.5px; }
.title br { display: none; }
.title span { letter-spacing: 0; }
.form-note { margin: 3px 0 0 37px; letter-spacing: .17px; }
.p-org { height: 64px; display: flex; padding-left: 72px; }
.org-l { width: 66px; margin-top: 40px; }
.org-name { width: 395px; height: 52px; border-bottom: 1px solid #000; text-align: center; padding-top: 38px; padding-left: 32px; font-size: 12px; line-height: 14px; letter-spacing: -.2px; }
.code-l { width: 75px; padding-top: 23px; display: flex; flex-direction: column; gap: 6px; text-align: right; }
.codes { width: 97px; height: 54px; margin-left: 5px; background: #000; padding: 1px; display: grid; grid-template-rows: 16px 17px 17px; gap: 1px; }
.codes div, .t-one div, .t-two div { background: #fff; display: grid; place-content: center; text-align: center; overflow: hidden; }
.codes div { padding-top: 1px; }
.t-one { width: 589px; height: 86px; margin-left: 114px; padding: 1px; background: #000; display: grid; gap: 1px; grid-template-columns: 49px 50px 78px 76px 75px 76px 47px 76px 52px; grid-template-rows: 19px 47px 16px; }
.tall { grid-row: span 2; }
.two { grid-column: span 2; }
.t-one .tight { place-content: start center; line-height: 10px; }
.t-one .d { margin: 2px 0 1px; }
.t-one .first { margin-left: 1px; letter-spacing: 0; }
.t-one .lastc { margin-right: 1px; }
.line-row { display: flex; }
.line-row i { border-bottom: 1px solid #000; }
.who { margin: 5px 0 0 72px; height: 17px; }
.who i { width: 533px; height: 12px; margin-left: 38px; }
.who span { width: 45px; }
.allow { margin-left: 73px; height: 27px; }
.allow span { width: 56px; }
.allow i { width: 265px; height: 10px; }
.allow .otk { width: 70px; padding: 1px 0 0 3px; }
.allow i:last-child { width: 221px; margin-left: 3px; }
.t-two { width: 667px; height: 114px; margin-left: 53px; padding: 1px; background: #000; display: grid; gap: 1px; grid-template-columns: 39px 43px 179px 79px 36px 42px 39px 39px 51px 59px 49px; grid-template-rows: 22px 47px 17px 23px; }
.t-two .num { justify-content: end; padding-right: 2px; }
.t-two .mat { letter-spacing: .26px; }
.sign { height: 30px; display: flex; padding-left: 67px; }
.sign > span { width: 44px; padding-top: 11px; }
.sign em { display: block; height: 20px; border-bottom: 1px solid #000; font-size: 12px; line-height: 14px; padding: 4px 0 0 10px; overflow: hidden; }
.sign small { display: block; font-size: 9px; }
.sign div { text-align: center; }
.s1 { width: 233px; } .s2 { width: 150px; margin-left: 7px; } .s3 { width: 188px; margin-left: 15px; }
.s1 small { padding-right: 16px; }
.sign-next { margin: 4px 0 0 565px; font-size: 12px; line-height: 14px; letter-spacing: 0; }

.main-h { padding-left: 1px; }
.wide { flex: 1; margin-left: 43px; display: flex; align-items: center; justify-content: center; border-right: 0; }
.grip-v { width: 8px; height: 7px; margin-left: 139px; background: repeating-linear-gradient(90deg, #7f96b8 0 1px, #f0f6ff 1px 2px); }
```
